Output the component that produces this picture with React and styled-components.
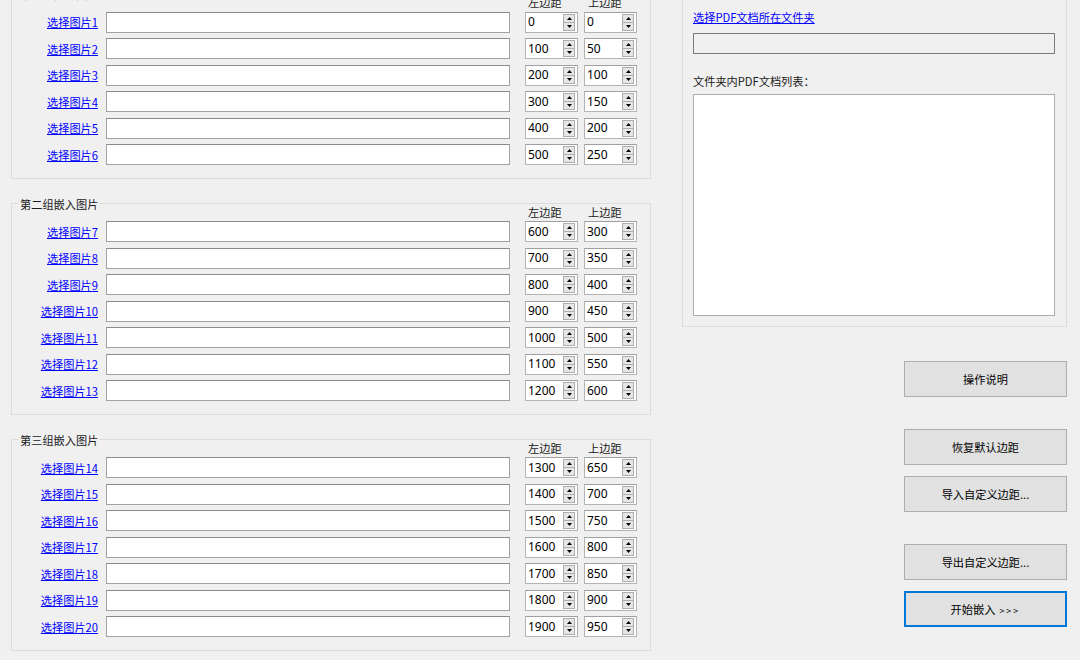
import React from "react";
import styled, { createGlobalStyle } from "styled-components";

const GlobalStyle = createGlobalStyle`
  html, body {
    margin: 0;
    padding: 0;
    background: #f0f0f0;
    overflow: hidden;
  }
  body {
    font-family: "Noto Sans CJK SC", "Noto Sans", sans-serif;
    font-size: 11.2px;
    color: #000;
  }
`;

const Window = styled.div`
  display: flex;
  gap: 31px;
  width: 1080px;
  height: 660px;
  padding-left: 11px;
  box-sizing: border-box;
  overflow: hidden;
`;

const LeftColumn = styled.div`
  display: flex;
  flex-direction: column;
  gap: 23.5px;
  width: 640px;
  margin-top: -7px;
`;

const Group = styled.div`
  border: 1px solid #dcdcdc;
  padding: 0 0 10px 0;
`;

const GroupTitle = styled.div`
  margin: -7px 0 0 7px;
  padding: 0 1px;
  width: fit-content;
  line-height: 14px;
  height: 14px;
  background: #f0f0f0;
  color: #1a1a1a;
`;

const HeaderRow = styled.div`
  display: flex;
  margin-top: -6px;
  padding-left: 513px;
  height: 14px;
  line-height: 14px;
  color: #1a1a1a;
`;

const HeaderCell = styled.div`
  width: 53px;
  padding-left: ${(p) => p.$pad}px;
  box-sizing: border-box;
  margin-right: 6px;
`;

const Row = styled.div`
  display: flex;
  align-items: center;
  height: 26.5px;
`;

const PickLink = styled.a`
  width: 86px;
  margin-right: 8px;
  text-align: right;
  color: #0000ff;
  text-decoration: underline;
  cursor: pointer;
  white-space: nowrap;
  line-height: 14px;
`;

const PathBox = styled.div`
  width: 404px;
  height: 21px;
  box-sizing: border-box;
  background: #fff;
  border: 1px solid #a2a2a2;
  border-top-color: #8c8c8c;
  margin-right: 15px;
`;

const Spinner = styled.div`
  display: flex;
  align-items: center;
  width: 53px;
  height: 21px;
  box-sizing: border-box;
  background: #fff;
  border: 1px solid #b4b4b4;
  border-top-color: #a0a0a0;
  margin-right: 6px;
  padding: 1px 2px 1px 2px;
`;

const SpinValue = styled.span`
  flex: 1;
  font-family: "Noto Sans", sans-serif;
  font-size: 12px;
  line-height: 14px;
  color: #000;
`;

const SpinButtons = styled.div`
  display: flex;
  flex-direction: column;
  width: 12px;
  height: 17px;
`;

const SpinButton = styled.div`
  flex: 1;
  display: flex;
  align-items: center;
  justify-content: center;
  background: #e6e6e6;
  border: 1px solid #adadad;
  box-sizing: border-box;
  & + & {
    border-top: none;
  }
`;

const RightColumn = styled.div`
  display: flex;
  flex-direction: column;
  width: 385px;
`;

const FolderPanel = styled.div`
  margin-top: -10px;
  border: 1px solid #dcdcdc;
  padding: 19px 11px 10px 10px;
  display: flex;
  flex-direction: column;
`;

const FolderLink = styled(PickLink)`
  width: auto;
  text-align: left;
  margin: 0;
`;

const FolderPath = styled.div`
  margin-top: 9px;
  height: 21px;
  box-sizing: border-box;
  background: #f0f0f0;
  border: 1px solid #7a7a7a;
`;

const ListLabel = styled.div`
  margin-top: 20px;
  line-height: 14px;
  color: #1a1a1a;
`;

const ListBox = styled.div`
  margin-top: 6px;
  height: 222px;
  box-sizing: border-box;
  background: #fff;
  border: 1px solid #ababab;
`;

const Button = styled.button`
  align-self: flex-end;
  width: 163px;
  height: 36px;
  margin-top: ${(p) => p.$gap}px;
  box-sizing: border-box;
  background: #e1e1e1;
  border: ${(p) => (p.$primary ? "2px solid #0078d7" : "1px solid #adadad")};
  font-family: "Noto Sans CJK SC", sans-serif;
  font-size: 11.2px;
  color: #000;
  padding: 0;
`;

const Arrows = styled.span`
  font-size: 9px;
  letter-spacing: 2px;
  margin-left: 4px;
`;

function Arrow({ up }) {
  return (
    <svg width="5" height="3" viewBox="0 0 5 3">
      <polygon points={up ? "0,3 5,3 2.5,0" : "0,0 5,0 2.5,3"} fill="#000" />
    </svg>
  );
}

function NumberBox({ value }) {
  return (
    <Spinner>
      <SpinValue>{value}</SpinValue>
      <SpinButtons>
        <SpinButton>
          <Arrow up />
        </SpinButton>
        <SpinButton>
          <Arrow />
        </SpinButton>
      </SpinButtons>
    </Spinner>
  );
}

function ImageGroup({ title, from, to }) {
  const rows = [];
  for (let n = from; n <= to; n++) rows.push(n);
  return (
    <Group>
      <GroupTitle>{title}</GroupTitle>
      <HeaderRow>
        <HeaderCell $pad={3}>左边距</HeaderCell>
        <HeaderCell $pad={4}>上边距</HeaderCell>
      </HeaderRow>
      {rows.map((n) => (
        <Row key={n}>
          <PickLink>选择图片{n}</PickLink>
          <PathBox />
          <NumberBox value={(n - 1) * 100} />
          <NumberBox value={(n - 1) * 50} />
        </Row>
      ))}
    </Group>
  );
}

export default function App() {
  return (
    <>
      <GlobalStyle />
      <Window>
        <LeftColumn>
          <ImageGroup title="第一组嵌入图片" from={1} to={6} />
          <ImageGroup title="第二组嵌入图片" from={7} to={13} />
          <ImageGroup title="第三组嵌入图片" from={14} to={20} />
        </LeftColumn>
        <RightColumn>
          <FolderPanel>
            <FolderLink>选择PDF文档所在文件夹</FolderLink>
            <FolderPath />
            <ListLabel>文件夹内PDF文档列表：</ListLabel>
            <ListBox />
          </FolderPanel>
          <Button $gap={34}>操作说明</Button>
          <Button $gap={32}>恢复默认边距</Button>
          <Button $gap={11}>导入自定义边距...</Button>
          <Button $gap={32}>导出自定义边距...</Button>
          <Button $gap={11} $primary>
            开始嵌入<Arrows>&gt;&gt;&gt;</Arrows>
          </Button>
        </RightColumn>
      </Window>
    </>
  );
}
